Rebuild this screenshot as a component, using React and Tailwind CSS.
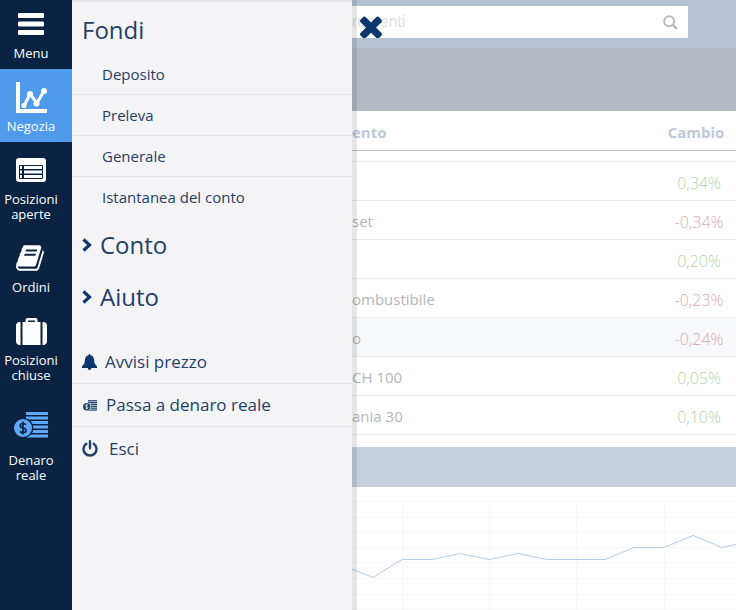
import { useState } from 'react';

// --- ICONS ---
function BarsIcon() {
  return (
    <svg width="26" height="22" viewBox="0 0 26 22" fill="currentColor">
      <rect width="26" height="5" rx="1" />
      <rect y="8.5" width="26" height="5" rx="1" />
      <rect y="17" width="26" height="5" rx="1" />
    </svg>
  );
}

function TradeIcon() {
  return (
    <svg width="31" height="31" viewBox="0 0 31 31" fill="none" stroke="currentColor">
      <path d="M2 0v29h29" strokeWidth="4" />
      <path d="M8 24l6-12 7 9 7-12" strokeWidth="3" />
      <g fill="currentColor" stroke="none">
        <circle cx="8" cy="23.500" r="2.6" />
        <circle cx="14" cy="12" r="3" />
        <circle cx="20.500" cy="21.500" r="3" />
        <circle cx="28" cy="9" r="3" />
      </g>
    </svg>
  );
}

function ListIcon() {
  return (
    <svg width="30" height="24" viewBox="0 0 30 24">
      <rect width="30" height="24" rx="3" fill="currentColor" />
      <rect x="3" y="7" width="24" height="14" rx="1" fill="#0a2342" />
      <g fill="currentColor">
        <rect x="4" y="8" width="2" height="3" />
        <rect x="8" y="8" width="18" height="3" />
        <rect x="4" y="12.500" width="2" height="3" />
        <rect x="8" y="12.500" width="18" height="3" />
        <rect x="4" y="17" width="2" height="3" />
        <rect x="8" y="17" width="18" height="3" />
      </g>
    </svg>
  );
}

function BookIcon() {
  return (
    <svg width="30" height="30" viewBox="0 0 1792 1792" fill="currentColor">
      <path d="M1639 478q40 57 18 129l-275 906q-19 64-76.500 107.500t-122.500 43.500h-923q-77 0-148.500-53.500t-99.500-131.500q-24-67-2-127 0-4 3-27t4-37q1-8-3-21.500t-3-19.500q2-11 8-21t16.500-23.500 16.500-23.500q23-38 45-91.500t30-91.500q3-10 .5-30t-.5-28q3-11 17-28t17-23q21-36 42-92t25-90q1-9-2.500-32t.5-28q4-13 22-30.500t22-22.500q19-26 42.500-84.500t27.500-96.500q1-8-3-25.500t-2-26.500q2-8 9-18t18-23 17-21q8-12 16.500-30.500t15-35 16-36 19.500-32 26.500-23.500 36-11.500 47.500 5.500l-1 3q38-9 51-9h761q74 0 114 56t18 130l-274 906q-36 119-71.500 153.500t-128.500 34.500h-869q-27 0-38 15-11 16-1 43 24 70 144 70h923q29 0 56-15.500t35-41.500l300-987q7-22 5-57 38 15 59 43zm-1064 2q-4 13 2 22.500t20 9.500h608q13 0 25.500-9.500t16.500-22.500l21-64q4-13-2-22.500t-20-9.500h-608q-13 0-25.500 9.500t-16.500 22.500zm-83 256q-4 13 2 22.500t20 9.500h608q13 0 25.500-9.500t16.500-22.500l21-64q4-13-2-22.500t-20-9.500h-608q-13 0-25.500 9.500t-16.500 22.500z" />
    </svg>
  );
}

function SuitcaseIcon() {
  return (
    <svg width="31" height="27" viewBox="0 0 31 27" fill="currentColor">
      <path d="M4.500 4v23H4q-4 0-4-4V8q0-4 4-4zM26.500 4v23h.5q4 0 4-4V8q0-4-4-4z" />
      <path d="M6.500 4h3V2q0-2 2-2h8q2 0 2 2v2h3v23h-18zM12 4h7V2.500h-7z" fillRule="evenodd" />
    </svg>
  );
}

function MoneyIcon({ width = 34, height = 26, hole = '#0a2342' }) {
  return (
    <svg width={width} height={height} viewBox="0 0 34 26">
      <g fill="currentColor">
        <rect x="12" width="22" height="3" />
        <rect x="12" y="4.500" width="22" height="3" />
        <rect x="12" y="9" width="22" height="3" />
        <rect x="12" y="13.500" width="22" height="3" />
        <rect x="12" y="18" width="22" height="3" />
        <rect x="12" y="22.500" width="22" height="3" />
      </g>
      <circle cx="9.500" cy="16" r="10" fill={hole} />
      <circle cx="9" cy="16" r="9" fill="currentColor" />
      <path
        d="M12 12.800q-1-1.300-3-1.300-2.800 0-2.800 2.200 0 1.700 2.900 2.300 3 .6 3 2.500 0 2.200-3 2.200-2.200 0-3.200-1.500M9 9.500v13"
        fill="none"
        stroke={hole}
        strokeWidth="1.700"
      />
    </svg>
  );
}

function ChevronIcon() {
  return (
    <svg width="10" height="14" viewBox="0 0 10 14" fill="none" stroke="#0b376d" strokeWidth="3.200">
      <path d="M1.500 1.500L7.500 7l-6 5.500" />
    </svg>
  );
}

function BellIcon() {
  return (
    <svg width="15" height="16" viewBox="0 0 15 16" fill="currentColor">
      <path d="M7.500 0q1 0 1 1.200 3.300.8 3.500 4.300.1 4.500 3 6.700v1.800H0v-1.800q2.900-2.200 3-6.700.2-3.500 3.500-4.300 0-1.200 1-1.200z" />
      <path d="M5.500 13.500h4q-.3 2.500-2 2.500t-2-2.500z" />
    </svg>
  );
}

function PowerIcon() {
  return (
    <svg width="16" height="17" viewBox="0 0 16 17" fill="none" stroke="currentColor" strokeWidth="2.400" strokeLinecap="round">
      <path d="M4.300 3.700a6.500 6.500 0 1 0 7.400 0M8 1.200v7" />
    </svg>
  );
}

function CloseIcon() {
  return (
    <svg width="22" height="22" viewBox="302 334 1188 1188" fill="currentColor">
      <path d="M1490 1322q0 40-28 68l-136 136q-28 28-68 28t-68-28l-294-294-294 294q-28 28-68 28t-68-28l-136-136q-28-28-28-68t28-68l294-294-294-294q-28-28-28-68t28-68l136-136q28-28 68-28t68 28l294 294 294-294q28-28 68-28t68 28l136 136q28 28 28 68t-28 68l-294 294 294 294q28 28 28 68z" />
    </svg>
  );
}

function SearchIcon() {
  return (
    <svg width="15" height="15" viewBox="0 0 15 15" fill="none" stroke="currentColor" strokeWidth="2">
      <circle cx="6.200" cy="6.200" r="5" />
      <path d="M10 10l4 4" strokeWidth="2.400" />
    </svg>
  );
}

// --- DATA ---
const navItems = [
  { label: 'Negozia', icon: <TradeIcon />, active: true },
  { label: 'Posizioni aperte', icon: <ListIcon /> },
  { label: 'Ordini', icon: <BookIcon /> },
  { label: 'Posizioni chiuse', icon: <SuitcaseIcon /> },
];

const fundLinks = ['Deposito', 'Preleva', 'Generale', 'Istantanea del conto'];

const rows = [
  { name: '', change: '0,34%' },
  { name: 'set', change: '-0,34%' },
  { name: '', change: '0,20%' },
  { name: 'ombustibile', change: '-0,23%' },
  { name: 'o', change: '-0,24%', selected: true },
  { name: 'CH 100', change: '0,05%' },
  { name: 'ania 30', change: '0,10%' },
];

function Sidebar() {
  return (
    <nav className="w-[72px] shrink-0 bg-[#0a2342] text-white text-[13px] leading-[15px] text-center">
      <button className="w-full flex flex-col items-center gap-[6px] pt-2 pb-2 pr-[10px]">
        <span className="h-8 flex items-center"><BarsIcon /></span>
        Menu
      </button>
      {navItems.map((item) => (
        <button
          key={item.label}
          className={`w-full flex flex-col items-center gap-[6px] pt-3 pb-2 pr-[10px] ${item.active ? 'bg-[#4f9aeb]' : ''}`}
        >
          <span className="h-8 flex items-center">{item.icon}</span>
          {item.label}
        </button>
      ))}
      <button className="w-full flex flex-col items-center gap-3 pt-[18px] pb-2 pr-[10px]">
        <span className="h-8 flex items-center text-[#5fa8f8]"><MoneyIcon /></span>
        Denaro reale
      </button>
    </nav>
  );
}

function Drawer() {
  return (
    <aside className="w-[280px] shrink-0 bg-[#f4f4f7] border-t-2 border-[#e7e7ea] text-[#1f4068]">
      <h2 className="h-[52px] pl-[10px] pt-1 flex items-center text-[24px]">Fondi</h2>
      <ul className="text-[15px]">
        {fundLinks.map((link) => (
          <li key={link} className="border-b border-[#e2e5ea] last:border-b-0">
            <a href="#" className="h-10 pl-[30px] flex items-center">{link}</a>
          </li>
        ))}
      </ul>
      <div className="pt-[2px] text-[24px]">
        <button className="w-full h-[52px] pl-[10px] flex items-center gap-2"><ChevronIcon />Conto</button>
        <button className="w-full h-[52px] pl-[10px] flex items-center gap-2"><ChevronIcon />Aiuto</button>
      </div>
      <div className="pt-[18px] text-[17px]">
        <a href="#" className="h-[43px] pl-[10px] flex items-center gap-2 border-b border-[#e2e5ea]">
          <span className="text-[#0b376d]"><BellIcon /></span>Avvisi prezzo
        </a>
        <a href="#" className="h-[43px] pl-[11px] flex items-center gap-[9px] border-b border-[#e2e5ea]">
          <MoneyIcon width={14} height={11} hole="#f4f4f7" />Passa a denaro reale
        </a>
        <button className="w-full h-[43px] pl-[10px] flex items-center gap-[11px]"><PowerIcon />Esci</button>
      </div>
    </aside>
  );
}

function Instruments() {
  return (
    <table className="w-full table-fixed border-collapse text-[15px]">
      <thead>
        <tr className="h-[39px] border-b border-[#bdc8d6] text-[#bcc9d9]">
          <th className="pt-1 text-left font-bold">ento</th>
          <th className="w-[74px] pt-1 pr-[6px] font-bold">Cambio</th>
        </tr>
      </thead>
      <tbody>
        <tr className="h-[11px] border-b border-[#ececee]"><td colSpan="2"></td></tr>
        {rows.map((row) => (
          <tr key={row.change} className={`h-[39px] border-b border-[#ececee] ${row.selected ? 'bg-[#f7f8fa]' : ''}`}>
            <td className="pt-1 text-[#b4b5b8]">{row.name}</td>
            <td className={`pt-1 text-center text-[16px] font-light ${row.change.startsWith('-') ? 'text-[#dba8b3]' : 'text-[#b2d6a6]'}`}>{row.change}</td>
          </tr>
        ))}
      </tbody>
    </table>
  );
}

function Chart() {
  return (
    <svg className="w-full h-[123px]" viewBox="0 0 384 123" preserveAspectRatio="xMinYMin slice" fill="none">
      <path
        d="M0 14.500h384M0 30.500h384M0 45.500h384M0 60.500h384M0 75.500h384M0 91.500h384M0 107.500h384M0 121.500h384M50.500 16v107M137.500 16v107M224.500 16v107M312.500 16v107"
        stroke="#f7f7f8"
      />
      <path
        d="M0 82L21 90.500 50 72.500H80L108 66.500 137 72.500 166 66.500 195 72.500H253L282 60.500H312L341 48.500 370 60.500 384 57.500"
        stroke="#b0cdee"
      />
    </svg>
  );
}

export default function App() {
  const [query, setQuery] = useState('');

  return (
    <div className="min-h-screen flex bg-white font-['Open_Sans','Noto_Sans',sans-serif]">
      <Sidebar />
      <Drawer />
      <main className="relative flex-1 min-w-0 overflow-hidden">
        <header className="h-12 pt-[6px] pr-12 bg-[#b5c2d4]">
          <div className="h-8 flex items-center bg-white pr-[10px] text-[#b7babd]">
            <input
              type="text"
              aria-label="Cerca strumenti"
              placeholder="rumenti"
              value={query}
              onChange={(e) => setQuery(e.target.value)}
              className="flex-1 min-w-0 text-[16px] font-['Liberation_Sans',sans-serif] outline-none placeholder:text-[#e2e2e2]"
            />
            <button aria-label="Cerca"><SearchIcon /></button>
          </div>
        </header>
        <div className="h-[63px] bg-[#b4bac2]" />
        <Instruments />
        <div className="mt-3 h-10 bg-[#c5d0df] border-b-2 border-[#c6cdd6]" />
        <Chart />

        {/* drawer shadow and close button sit over the page */}
        <div className="absolute inset-y-0 left-0 w-[5px] bg-black/10" />
        <button aria-label="Chiudi" className="absolute left-2 top-4 text-[#0b376d]"><CloseIcon /></button>
      </main>
    </div>
  );
}
